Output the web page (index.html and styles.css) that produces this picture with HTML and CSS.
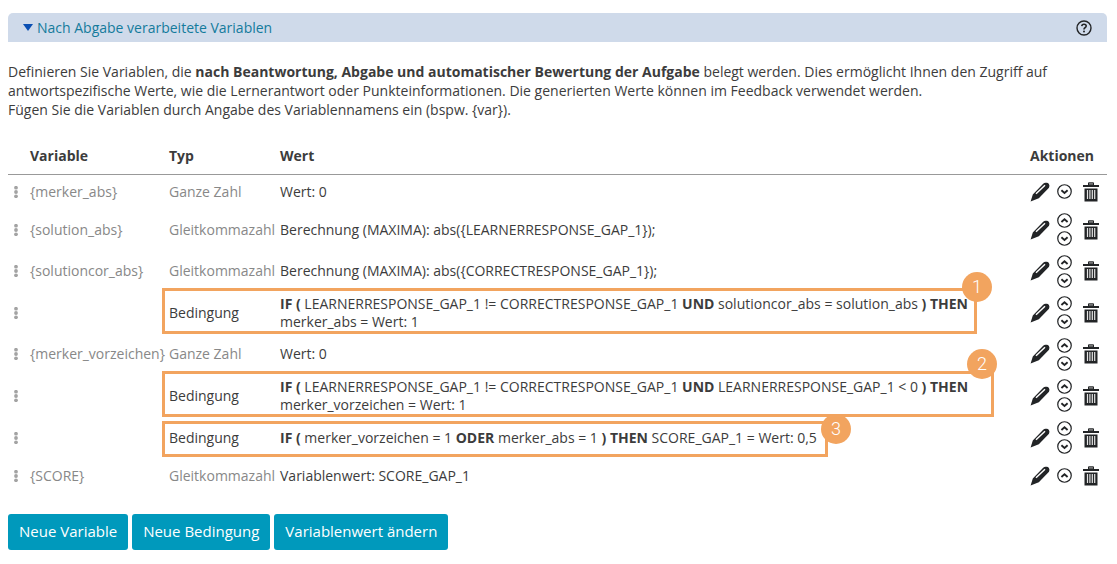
FILE: index.html
```html
<!DOCTYPE html>
<html lang="de">
<head>
<meta charset="utf-8">
<title>Nach Abgabe verarbeitete Variablen</title>
<link rel="stylesheet" href="styles.css">
</head>
<body>
<svg class="sprite" aria-hidden="true">
  <symbol id="pencil" viewBox="0 0 20 20"><path fill="#222426" d="M.6 19.4 L2.8 12.4 L13.2 1.8 Q14.5 .4 16.3 .8 Q18 .6 18.9 2.1 Q20 3.8 19 5.8 L8.8 16.2 Z"/><path fill="none" stroke="#fff" stroke-width="1.4" d="M6 11.8 L15 3.2"/></symbol>
  <symbol id="up" viewBox="0 0 16 16"><circle cx="8" cy="8" r="7.2" fill="none" stroke="#222426" stroke-width="1.3"/><path fill="none" stroke="#222426" stroke-width="2" d="M4.7 9.6 L8 6.7 L11.3 9.6"/></symbol>
  <symbol id="down" viewBox="0 0 16 16"><circle cx="8" cy="8" r="7.2" fill="none" stroke="#222426" stroke-width="1.3"/><path fill="none" stroke="#222426" stroke-width="2" d="M4.7 6.6 L8 9.5 L11.3 6.6"/></symbol>
  <symbol id="trash" viewBox="0 0 16 20"><path fill="#222426" d="M0 3h16v2H0zM1.5 6.4h13V19.5h-13z"/><path fill="#999" stroke="#222426" d="M5.5 3V.8h5V3z"/><path stroke="#e6e6e6" stroke-width="1.2" d="M4.5 8v9M6.9 8v9M9.3 8v9M11.7 8v9"/></symbol>
  <symbol id="grip" viewBox="0 0 6 14"><g fill="#a3a3a3"><circle cx="3" cy="2" r="2.2"/><circle cx="3" cy="7" r="2.2"/><circle cx="3" cy="12" r="2.2"/></g></symbol>
</svg>
<main>
  <header class="bar">
    <button class="toggle" type="button" aria-expanded="true"><svg class="caret" viewBox="0 0 10 7"><path fill="#0b4fb3" d="M0 0h10L5 7z"/></svg>Nach Abgabe verarbeitete Variablen</button>
    <button class="icon-button" type="button" aria-label="Hilfe"><svg class="help" viewBox="0 0 16 16"><circle cx="8" cy="8" r="7" fill="none" stroke="#222426" stroke-width="1.4"/><path fill="none" stroke="#222426" stroke-width="1.6" d="M5.8 6.1Q5.9 4.2 8 4.2Q10.2 4.2 10.2 6Q10.2 7 9 7.7Q8 8.3 8 9.6"/><circle cx="8" cy="11.6" r="1" fill="#222426"/></svg></button>
  </header>
  <p class="intro">Definieren Sie Variablen, die <b>nach Beantwortung, Abgabe und automatischer Bewertung der Aufgabe</b> belegt werden. Dies ermöglicht Ihnen den Zugriff auf antwortspezifische Werte, wie die Lernerantwort oder Punkteinformationen. Die generierten Werte können im Feedback verwendet werden.<br>Fügen Sie die Variablen durch Angabe des Variablennamens ein (bspw. {var}).</p>
  <table class="variables">
    <colgroup><col class="col-grip"><col class="col-name"><col class="col-type"><col><col class="col-actions"></colgroup>
    <thead><tr><th></th><th>Variable</th><th>Typ</th><th>Wert</th><th>Aktionen</th></tr></thead>
    <tbody>
      <tr class="edge">
        <td><svg class="grip"><use href="#grip"/></svg></td><td class="muted">{merker_abs}</td><td class="muted">Ganze Zahl</td><td>Wert: 0</td>
        <td><div class="actions"><button class="icon-button" type="button" aria-label="Bearbeiten"><svg class="pencil"><use href="#pencil"/></svg></button><div class="moves"><button class="icon-button" type="button" aria-label="Nach unten"><svg class="move"><use href="#down"/></svg></button></div><button class="icon-button" type="button" aria-label="Löschen"><svg class="trash"><use href="#trash"/></svg></button></div></td>
      </tr>
      <tr>
        <td><svg class="grip"><use href="#grip"/></svg></td><td class="muted">{solution_abs}</td><td class="muted">Gleitkommazahl</td><td>Berechnung (MAXIMA): abs({LEARNERRESPONSE_GAP_1});</td>
        <td><div class="actions"><button class="icon-button" type="button" aria-label="Bearbeiten"><svg class="pencil"><use href="#pencil"/></svg></button><div class="moves"><button class="icon-button" type="button" aria-label="Nach oben"><svg class="move"><use href="#up"/></svg></button><button class="icon-button" type="button" aria-label="Nach unten"><svg class="move"><use href="#down"/></svg></button></div><button class="icon-button" type="button" aria-label="Löschen"><svg class="trash"><use href="#trash"/></svg></button></div></td>
      </tr>
      <tr>
        <td><svg class="grip"><use href="#grip"/></svg></td><td class="muted">{solutioncor_abs}</td><td class="muted">Gleitkommazahl</td><td>Berechnung (MAXIMA): abs({CORRECTRESPONSE_GAP_1});</td>
        <td><div class="actions"><button class="icon-button" type="button" aria-label="Bearbeiten"><svg class="pencil"><use href="#pencil"/></svg></button><div class="moves"><button class="icon-button" type="button" aria-label="Nach oben"><svg class="move"><use href="#up"/></svg></button><button class="icon-button" type="button" aria-label="Nach unten"><svg class="move"><use href="#down"/></svg></button></div><button class="icon-button" type="button" aria-label="Löschen"><svg class="trash"><use href="#trash"/></svg></button></div></td>
      </tr>
      <tr>
        <td><svg class="grip"><use href="#grip"/></svg></td><td></td><td class="marked">Bedingung<span class="frame frame-one"><span class="badge">1</span></span></td><td><b>IF (</b> LEARNERRESPONSE_GAP_1 != CORRECTRESPONSE_GAP_1 <b>UND</b> solutioncor_abs = solution_abs <b>) THEN</b><br>merker_abs = Wert: 1</td>
        <td><div class="actions"><button class="icon-button" type="button" aria-label="Bearbeiten"><svg class="pencil"><use href="#pencil"/></svg></button><div class="moves"><button class="icon-button" type="button" aria-label="Nach oben"><svg class="move"><use href="#up"/></svg></button><button class="icon-button" type="button" aria-label="Nach unten"><svg class="move"><use href="#down"/></svg></button></div><button class="icon-button" type="button" aria-label="Löschen"><svg class="trash"><use href="#trash"/></svg></button></div></td>
      </tr>
      <tr>
        <td><svg class="grip"><use href="#grip"/></svg></td><td class="muted">{merker_vorzeichen}</td><td class="muted">Ganze Zahl</td><td>Wert: 0</td>
        <td><div class="actions"><button class="icon-button" type="button" aria-label="Bearbeiten"><svg class="pencil"><use href="#pencil"/></svg></button><div class="moves"><button class="icon-button" type="button" aria-label="Nach oben"><svg class="move"><use href="#up"/></svg></button><button class="icon-button" type="button" aria-label="Nach unten"><svg class="move"><use href="#down"/></svg></button></div><button class="icon-button" type="button" aria-label="Löschen"><svg class="trash"><use href="#trash"/></svg></button></div></td>
      </tr>
      <tr>
        <td><svg class="grip"><use href="#grip"/></svg></td><td></td><td class="marked">Bedingung<span class="frame frame-two"><span class="badge">2</span></span></td><td><b>IF (</b> LEARNERRESPONSE_GAP_1 != CORRECTRESPONSE_GAP_1 <b>UND</b> LEARNERRESPONSE_GAP_1 &lt; 0 <b>) THEN</b><br>merker_vorzeichen = Wert: 1</td>
        <td><div class="actions"><button class="icon-button" type="button" aria-label="Bearbeiten"><svg class="pencil"><use href="#pencil"/></svg></button><div class="moves"><button class="icon-button" type="button" aria-label="Nach oben"><svg class="move"><use href="#up"/></svg></button><button class="icon-button" type="button" aria-label="Nach unten"><svg class="move"><use href="#down"/></svg></button></div><button class="icon-button" type="button" aria-label="Löschen"><svg class="trash"><use href="#trash"/></svg></button></div></td>
      </tr>
      <tr>
        <td><svg class="grip"><use href="#grip"/></svg></td><td></td><td class="marked">Bedingung<span class="frame frame-three"><span class="badge">3</span></span></td><td><b>IF (</b> merker_vorzeichen = 1 <b>ODER</b> merker_abs = 1 <b>) THEN</b> SCORE_GAP_1 = Wert: 0,5</td>
        <td><div class="actions"><button class="icon-button" type="button" aria-label="Bearbeiten"><svg class="pencil"><use href="#pencil"/></svg></button><div class="moves"><button class="icon-button" type="button" aria-label="Nach oben"><svg class="move"><use href="#up"/></svg></button><button class="icon-button" type="button" aria-label="Nach unten"><svg class="move"><use href="#down"/></svg></button></div><button class="icon-button" type="button" aria-label="Löschen"><svg class="trash"><use href="#trash"/></svg></button></div></td>
      </tr>
      <tr class="edge">
        <td><svg class="grip"><use href="#grip"/></svg></td><td class="muted">{SCORE}</td><td class="muted">Gleitkommazahl</td><td>Variablenwert: SCORE_GAP_1</td>
        <td><div class="actions"><button class="icon-button" type="button" aria-label="Bearbeiten"><svg class="pencil"><use href="#pencil"/></svg></button><div class="moves"><button class="icon-button" type="button" aria-label="Nach oben"><svg class="move"><use href="#up"/></svg></button></div><button class="icon-button" type="button" aria-label="Löschen"><svg class="trash"><use href="#trash"/></svg></button></div></td>
      </tr>
    </tbody>
  </table>
  <div class="buttons">
    <button class="primary" type="button">Neue Variable</button>
    <button class="primary" type="button">Neue Bedingung</button>
    <button class="primary" type="button">Variablenwert ändern</button>
  </div>
</main>
</body>
</html>
```
FILE: styles.css
```css
* { box-sizing: border-box; }
body {
  margin: 0;
  padding: 13px 10px 0 8px;
  background: #fff;
  color: #3c3c3c;
  font: 14px/19px "Open Sans", "Noto Sans", sans-serif;
}
button { font: inherit; cursor: pointer; }
svg { display: block; }
.sprite { position: absolute; width: 0; height: 0; }
.bar {
  display: flex;
  align-items: center;
  justify-content: space-between;
  height: 29px;
  padding: 0 15px;
  border-radius: 5px 5px 0 0;
  background: #cfdaea;
}
.toggle {
  display: flex;
  align-items: center;
  gap: 4px;
  padding: 0;
  border: 0;
  background: none;
  color: #147b9c;
}
.caret { width: 10px; height: 7px; }
.icon-button { padding: 0; border: 0; background: none; }
.help { width: 16px; height: 16px; }
.intro { margin: 20px 0 27px; }
.variables { width: 100%; border-collapse: collapse; table-layout: fixed; }
.col-grip { width: 22px; }
.col-name { width: 139px; }
.col-type { width: 111px; }
.col-actions { width: 77px; }
th {
  height: 28px;
  padding: 0 0 9px;
  border-bottom: 1px solid #999;
  text-align: left;
}
td { height: 41px; padding: 0; line-height: 18px; white-space: nowrap; }
tr:nth-child(even) td, tr:nth-child(n+6) td { height: 42px; }
tr.edge:nth-child(n) td { height: 34px; }
.muted { color: #888; }
.grip { width: 6px; height: 12px; margin-left: 5px; }
.actions { display: flex; align-items: center; gap: 7px; }
.moves { display: grid; gap: 3px; }
.pencil { width: 20px; height: 20px; }
.move { width: 15px; height: 15px; }
.trash { width: 16px; height: 20px; margin-left: 4px; }
.marked { position: relative; }
.frame { position: absolute; left: -7px; top: -4px; height: 46px; border: 3px solid #f2a45f; pointer-events: none; }
.frame-one { width: 815px; }
.frame-two { width: 832px; }
.frame-three { top: 4px; width: 666px; height: 36px; }
.badge {
  position: absolute;
  top: -19px;
  right: -18px;
  width: 30px;
  height: 30px;
  border-radius: 50%;
  background: #f2a45f;
  color: #fff;
  font: 300 18px/30px Roboto, sans-serif;
  text-align: center;
}
.frame-two .badge { top: -25px; right: -6px; }
.frame-three .badge { top: -10px; right: -26px; }
.buttons { display: flex; flex-wrap: wrap; gap: 4px; margin-top: 21px; }
.primary {
  height: 36px;
  padding: 0 11px;
  border: 0;
  border-radius: 3px;
  background: #0099bc;
  color: #fff;
  font-size: 15px;
}
```
